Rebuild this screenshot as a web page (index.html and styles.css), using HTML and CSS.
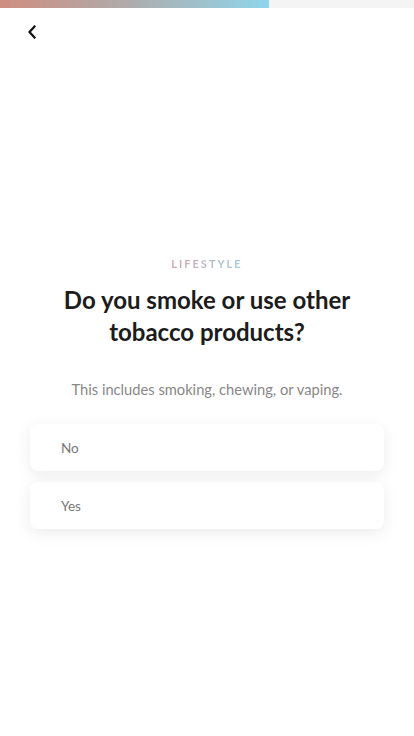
FILE: index.html
```html
<!DOCTYPE html>
<html lang="en">
<head>
  <meta charset="UTF-8">
  <meta name="viewport" content="width=device-width, initial-scale=1.0">
  <title>Lifestyle</title>
  <link rel="stylesheet" href="styles.css">
</head>
<body>
  <div class="progress"><div class="progress-fill"></div></div>

  <header class="topbar">
    <a href="#" class="back" aria-label="Back">
      <svg width="10" height="14" viewBox="0 0 10 14"><path d="M7.5 1.5 L2.5 7 L7.5 12.5" fill="none" stroke="#111" stroke-width="2.2" stroke-linecap="square"/></svg>
    </a>
  </header>

  <main class="question">
    <p class="category">LIFESTYLE</p>
    <h1>Do you smoke or use other tobacco products?</h1>
    <p class="hint">This includes smoking, chewing, or vaping.</p>

    <div class="options">
      <button class="option">No</button>
      <button class="option">Yes</button>
    </div>
  </main>
</body>
</html>
```

FILE: styles.css
```css
html, body { min-height: 100%; }
body { margin: 0; min-height: 736px; background: #fff; font-family: Lato, "Open Sans", sans-serif; color: #1b1b1b; }
.progress { height: 8px; background: #f4f4f4; }
.progress-fill { width: 269px; height: 100%; background: linear-gradient(90deg, #d08d80, #b0aaa8 45%, #8fd5ec); }
.topbar { padding: 15px 23px 0; height: 30px; }
.back { display: inline-flex; padding: 2px 4px; }
.question { padding: 199px 30px 40px; text-align: center; }
.category { margin: 0; font-size: 11px; font-weight: 700; letter-spacing: 2px; background: linear-gradient(90deg, #d9a0a8, #9ccfe0); -webkit-background-clip: text; background-clip: text; color: transparent; display: inline-block; }
h1 { margin: 13px 10px 0; font-size: 24px; line-height: 32px; font-weight: 700; color: #1c1c1c; }
.hint { margin: 32px 0 0; font-size: 14.7px; color: #888; }
.options { display: flex; flex-direction: column; gap: 11px; margin-top: 26px; }
.option { height: 47px; border: none; border-radius: 8px; background: #fff; box-shadow: 0 4px 16px rgba(0,0,0,0.08); text-align: left; padding: 0 31px; font-family: inherit; font-size: 13.5px; color: #777; cursor: pointer; }
```
